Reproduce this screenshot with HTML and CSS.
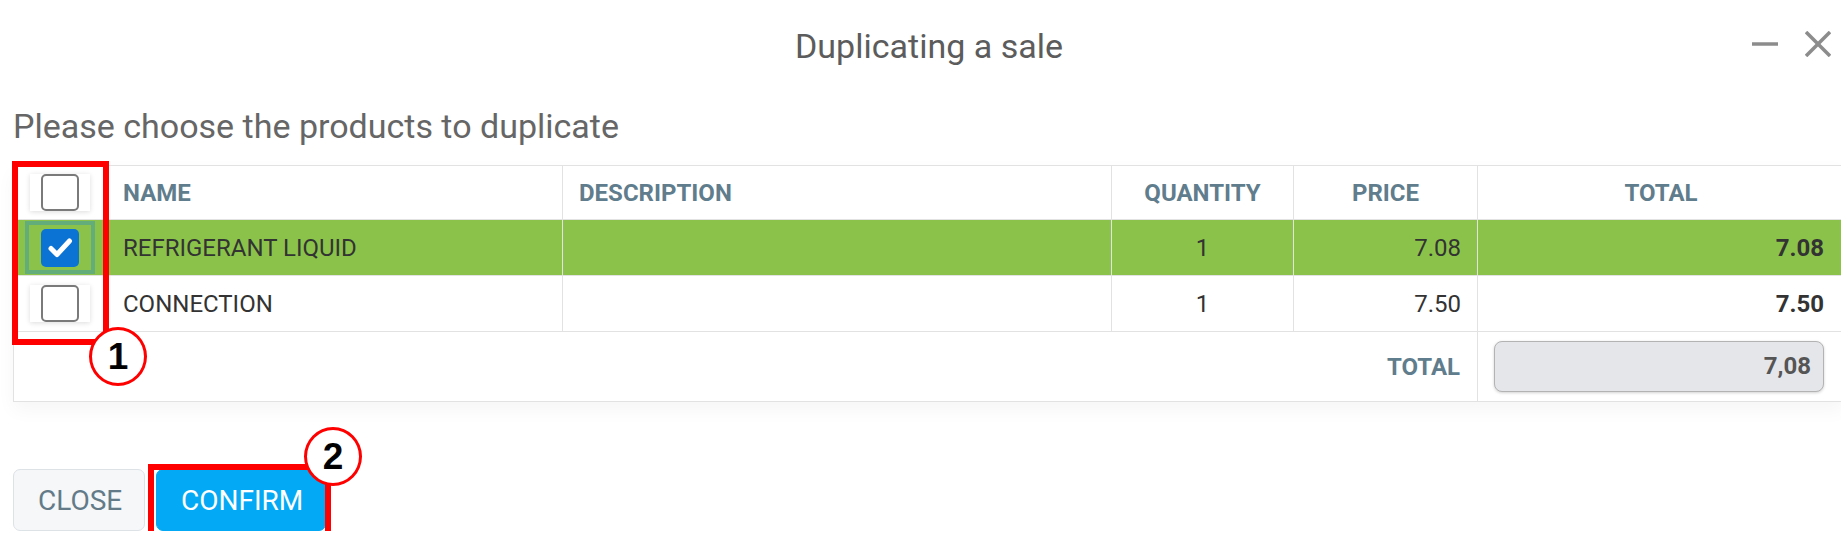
FILE: index.html
```html
<!DOCTYPE html>
<html lang="en">
<head>
    <meta charset="UTF-8">
    <meta name="viewport" content="width=device-width, initial-scale=1.0">
    <title>Duplicating a sale</title>
    <link rel="stylesheet" href="styles.css">
</head>
<body>
    <div class="dialog">
        <div class="dialog-header">
            <h1 class="dialog-title">Duplicating a sale</h1>
            <div class="window-controls">
                <svg width="28" height="28" viewBox="0 0 28 28"><line x1="1" y1="14" x2="27" y2="14" /></svg>
                <svg width="26" height="26" viewBox="0 0 26 26"><line x1="1" y1="1" x2="25" y2="25" /><line x1="25" y1="1" x2="1" y2="25" /></svg>
            </div>
        </div>

        <p class="subtitle">Please choose the products to duplicate</p>

        <table class="products">
            <colgroup>
                <col style="width: 93px">
                <col style="width: 456px">
                <col style="width: 549px">
                <col style="width: 182px">
                <col style="width: 184px">
                <col>
            </colgroup>
            <thead>
                <tr>
                    <th><span class="check-wrap"><span class="check"></span></span></th>
                    <th class="left">NAME</th>
                    <th class="left">DESCRIPTION</th>
                    <th>QUANTITY</th>
                    <th>PRICE</th>
                    <th>TOTAL</th>
                </tr>
            </thead>
            <tbody>
                <tr class="selected">
                    <td><span class="check-wrap focused"><span class="check checked">
                        <svg width="38" height="38" viewBox="0 0 38 38"><path d="M10 19.5 L16 25.5 L28.5 12" /></svg>
                    </span></span></td>
                    <td>REFRIGERANT LIQUID</td>
                    <td></td>
                    <td class="center">1</td>
                    <td class="right">7.08</td>
                    <td class="right strong">7.08</td>
                </tr>
                <tr>
                    <td><span class="check-wrap"><span class="check"></span></span></td>
                    <td>CONNECTION</td>
                    <td></td>
                    <td class="center">1</td>
                    <td class="right">7.50</td>
                    <td class="right strong">7.50</td>
                </tr>
            </tbody>
            <tfoot>
                <tr>
                    <td colspan="5" class="total-label">TOTAL</td>
                    <td><div class="total-field">7,08</div></td>
                </tr>
            </tfoot>
        </table>

        <div class="actions">
            <button class="btn btn-light">CLOSE</button>
            <button class="btn btn-primary">CONFIRM</button>
        </div>

        <!-- step markers -->
        <div class="mark-box mark-box-1"></div>
        <div class="mark-num mark-num-1">1</div>
        <div class="mark-box mark-box-2"></div>
        <div class="mark-num mark-num-2">2</div>
    </div>
</body>
</html>
```

FILE: styles.css
```css
* {
    margin: 0;
    padding: 0;
    box-sizing: border-box;
}

body {
    background: #fff;
    overflow: hidden;
    font-family: Roboto, 'Liberation Sans', sans-serif;
    color: #333;
}

.dialog {
    position: relative;
    width: 1858px;
    padding: 0 13px;
}

.dialog-header {
    display: grid;
    grid-template-columns: 1fr auto 1fr;
    align-items: center;
    padding-top: 26px;
}

.dialog-title {
    grid-column: 2;
    font-size: 34px;
    line-height: 40px;
    font-weight: 400;
    color: #5c5c5c;
}

.window-controls {
    grid-column: 3;
    justify-self: end;
    display: flex;
    align-items: center;
    gap: 26px;
    padding-right: 14px;
    padding-bottom: 5px;
}

.window-controls svg {
    display: block;
    stroke: #8c8c8c;
    stroke-width: 3.5;
}

.subtitle {
    margin-top: 41px;
    font-size: 34px;
    line-height: 39px;
    color: #666;
}

.products {
    margin-top: 19px;
    width: 100%;
    table-layout: fixed;
    border-collapse: collapse;
    border: 1px solid #e6eaee;
    box-shadow: 0 8px 18px rgba(0, 0, 0, 0.04);
    font-size: 24px;
}

.products th,
.products td {
    border: 1px solid #e2e2e2;
    padding: 0 16px;
    vertical-align: middle;
    text-align: center;
}

.products thead tr {
    height: 54px;
}

.products th {
    font-weight: 700;
    color: #5f7d8c;
}

.products tbody tr {
    height: 56px;
}

.products td {
    text-align: left;
    color: #333;
}

.products th.left {
    text-align: left;
}

.products td.center {
    text-align: center;
}

.products td.right {
    text-align: right;
}

.products td:last-child {
    padding-right: 20px;
}

.products td.strong {
    font-weight: 700;
}

.products tr.selected {
    background: #8bc34a;
}

.products th:first-child,
.products td:first-child {
    padding: 0;
    text-align: center;
}

.check-wrap {
    display: inline-flex;
    vertical-align: middle;
    padding: 0 11px;
    background: #fff;
    box-shadow: 0 1px 5px rgba(0, 0, 0, 0.14);
}

.check-wrap.focused {
    padding: 0 12px;
    background: transparent;
    box-shadow: none;
    outline: 4px solid #63ad7a;
    outline-offset: 0;
    height: 45px;
    align-items: center;
}

.check {
    display: block;
    width: 38px;
    height: 37px;
    border: 2px solid #7a7a7a;
    border-radius: 5px;
    background: #fff;
}

.check.checked {
    height: 38px;
    border: none;
    background: #0b73d3;
}

.check svg {
    display: block;
    fill: none;
    stroke: #fff;
    stroke-width: 5;
    stroke-linecap: round;
    stroke-linejoin: round;
}

.products tfoot tr {
    height: 70px;
}

.products td.total-label {
    text-align: right;
    font-weight: 700;
    color: #5f7d8c;
    padding-right: 17px;
}

.total-field {
    height: 51px;
    line-height: 49px;
    padding-right: 12px;
    text-align: right;
    font-weight: 700;
    color: #555;
    background: #e5e6ea;
    border: 1px solid #b3b3b3;
    border-radius: 8px;
    box-shadow: 0 1px 3px rgba(0, 0, 0, 0.18);
}

.actions {
    display: flex;
    gap: 11px;
    margin-top: 67px;
}

.btn {
    height: 62px;
    padding: 0 24px;
    font-family: Roboto, 'Liberation Sans', sans-serif;
    font-size: 28px;
    border-radius: 7px;
    cursor: pointer;
}

.btn-light {
    width: 132px;
    background: #f5f7f9;
    border: 1px solid #dde2e6;
    color: #637b88;
}

.btn-primary {
    width: 170px;
    background: #03a9f4;
    border: 1px solid #03a9f4;
    color: #fff;
}

.mark-box {
    position: absolute;
    border: 6px solid #ff0000;
}

.mark-box-1 {
    left: 12px;
    top: 161px;
    width: 97px;
    height: 184px;
}

.mark-box-2 {
    left: 148px;
    top: 464px;
    width: 183px;
    height: 73px;
}

.mark-num {
    position: absolute;
    width: 58px;
    height: 59px;
    border: 3px solid #ff0000;
    border-radius: 50%;
    background: #fff;
    font-family: 'Liberation Sans', Arial, sans-serif;
    font-weight: 700;
    font-size: 37px;
    line-height: 53px;
    text-align: center;
    color: #000;
}

.mark-num-1 {
    left: 89px;
    top: 327px;
}

.mark-num-2 {
    left: 304px;
    top: 427px;
}
```
